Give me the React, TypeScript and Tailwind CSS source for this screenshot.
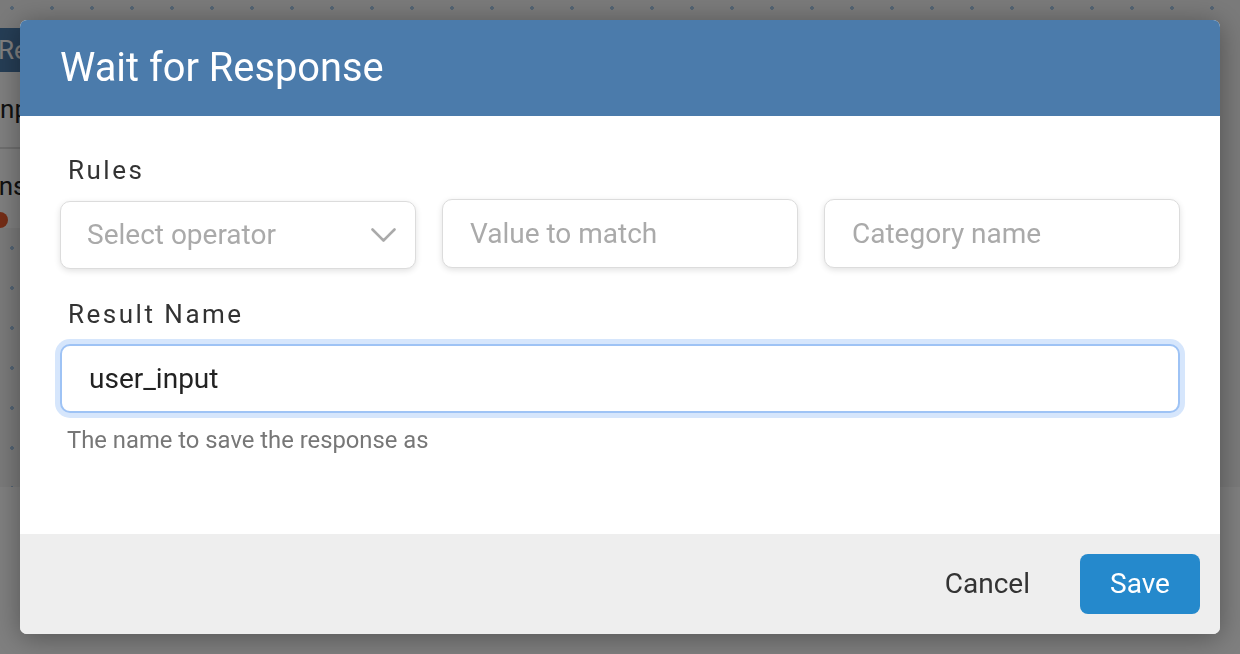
export default function App() {
  return (
    <div className="relative h-[654px] w-[1240px] overflow-hidden bg-white font-['Roboto',sans-serif]">
      <Canvas />
      <div className="fixed inset-0 flex bg-black/50 p-5">
        <div className="flex flex-1 flex-col overflow-hidden rounded-[7px] bg-white shadow-[0_4px_28px_rgba(0,0,0,0.35)]">
          <div className="flex h-24 items-center bg-[#4b7bab] px-10">
            <h2 className="text-[39.8px] leading-none text-white">Wait for Response</h2>
          </div>

          <div className="flex-1 px-10 pt-[38px]">
            <Label>Rules</Label>
            <div className="mt-[13px] grid grid-cols-3 gap-[26px]">
              <div className="mt-0.5 flex h-[68px] items-center justify-between rounded-[10px] border border-[#dcdcdc] bg-white pl-[26px] pr-[19px] shadow-[0_2px_6px_rgba(0,0,0,0.12)]">
                <span className="text-[28px] text-[#aaaaaa]">Select operator</span>
                <svg width="25" height="15" viewBox="0 0 25 15" fill="none">
                  <polyline points="1.5,1.5 12.5,12.5 23.5,1.5" stroke="#aaaaaa" strokeWidth="2.6" strokeLinecap="round" strokeLinejoin="round" />
                </svg>
              </div>
              <TextBox placeholder="Value to match" />
              <TextBox placeholder="Category name" />
            </div>

            <div className="mt-[29px]">
              <Label>Result Name</Label>
            </div>
            <input
              readOnly
              value="user_input"
              className="mt-[14px] h-[69px] w-full rounded-[10px] border-2 border-[#9ec3f5] bg-white px-[27px] text-[28px] text-[#222] outline-none ring-[5px] ring-[#d6e6fc]"
            />
            <p className="mt-[11px] pl-[7px] text-[23.8px] leading-[32px] text-[#777777]">The name to save the response as</p>
          </div>

          <div className="flex h-[100px] items-center justify-end bg-[#eeeeee] px-5">
            <button className="mr-[50px] text-[28px] text-[#333333]">Cancel</button>
            <button className="h-[60px] w-[120px] rounded-lg bg-[#2589cc] text-[28px] text-white">Save</button>
          </div>
        </div>
      </div>
    </div>
  );
}

function Label({ children }: { children: React.ReactNode }) {
  return <div className="pl-2 text-[26px] leading-[32px] tracking-[2.5px] text-[#333333]">{children}</div>;
}

function TextBox({ placeholder }: { placeholder: string }) {
  return (
    <input
      readOnly
      placeholder={placeholder}
      className="h-[69px] w-full rounded-[10px] border border-[#dcdcdc] bg-white px-[27px] text-[28px] text-[#222] shadow-[0_2px_6px_rgba(0,0,0,0.12)] outline-none placeholder:text-[#aaaaaa]"
    />
  );
}

function Canvas() {
  return (
    <div className="relative h-[487px] bg-[#f4f4f4] bg-[radial-gradient(circle,#a8c8e6_1.6px,transparent_2px)] bg-[length:40px_40px] bg-[position:-8px_-12px]">
      <div className="absolute left-[-60px] top-[28px] w-[340px] bg-white">
        <div className="flex h-[44px] items-center bg-[#4b7bab] pl-[58px] text-[26px] text-white">Response</div>
        <div className="border-b-2 border-[#dddddd] py-[18px] pl-[53px] text-[26px] text-[#222]">Input</div>
        <div className="pt-[24px] text-[26px] leading-none text-[#222]">
          <span className="ml-[-14px]">Responses</span>
        </div>
        <div className="ml-[52px] mt-[13px] h-[16px] w-[16px] rounded-full bg-[#e85a2c]" />
      </div>
    </div>
  );
}
